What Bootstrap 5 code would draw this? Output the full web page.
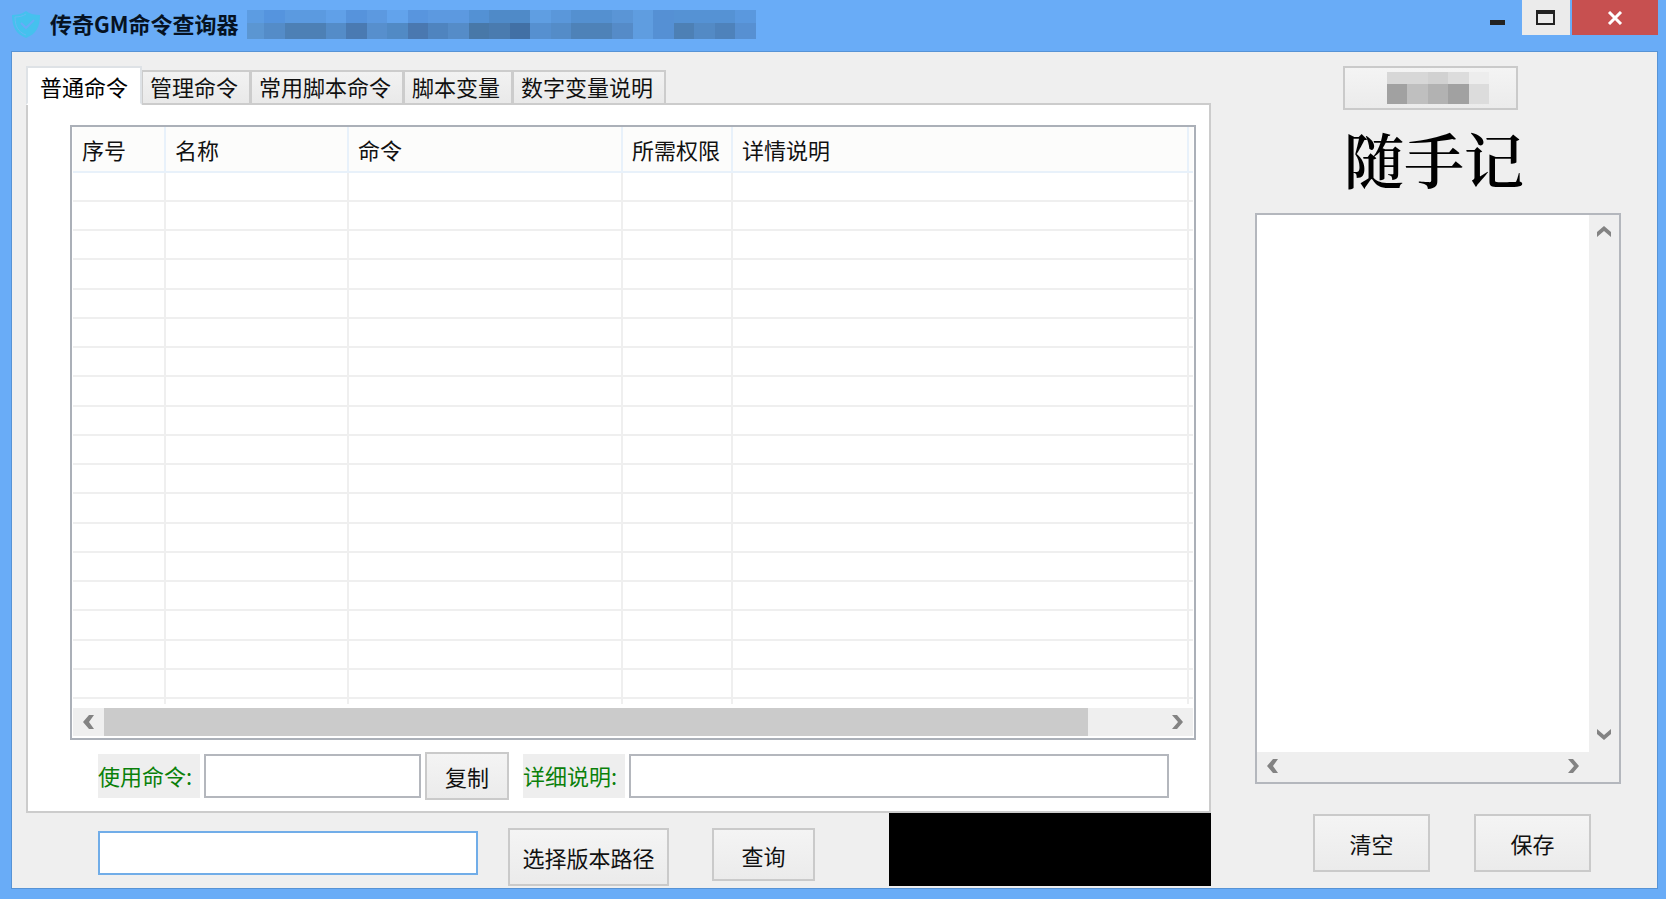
<!DOCTYPE html>
<html lang="zh-CN">
<head>
<meta charset="utf-8">
<meta name="viewport" content="width=device-width, initial-scale=1">
<title>传奇GM命令查询器</title>
<link href="https://cdn.jsdelivr.net/npm/bootstrap@5.3.0/dist/css/bootstrap.min.css" rel="stylesheet">
<style>
  body { background: #69acf7; color: #111; font-family: "Noto Sans CJK SC", sans-serif; font-size: 22px; line-height: 28px; }
  .app-window { min-height: 100vh; padding: 0 8px 11px 11px; }
  .title-bar { height: 51px; }
  .title-bar h1 { font-size: 22px; line-height: 28px; font-weight: 700; color: #061222; margin: 9px 8px 0 8px; }
  .app-icon { margin: 10px 0 0 0; }
  .title-mask { margin-top: 10px; }
  .win-btn { height: 35px; border: 0; padding: 0; display: flex; align-items: center; justify-content: center; }
  .win-min { width: 48px; background: none; }
  .win-max { width: 48px; background: #ebebeb; margin-right: 2px; }
  .win-close { width: 86px; background: #c75050; }
  .client { background: #efefef; border: 1px solid #5793d5; padding: 14px 36px 2px 14px; gap: 44px; }
  .side-col { width: 366px; }
  /* tabs */
  .cmd-tabs { height: 39px; padding: 0; border: 0; position: relative; z-index: 1; margin-bottom: -2px; }
  .cmd-tabs .nav-link { border: 2px solid #ccc; border-left-width: 1px; border-radius: 0; background: linear-gradient(#f2f2f2, #e9e9e9); color: #111; height: 35px; padding: 0 11px 0 7px; line-height: 28px; margin: 0; white-space: nowrap; }
  .cmd-tabs .nav-link.active { height: 39px; line-height: 32px; background: #fff; border-bottom-color: #fff; border-left-width: 2px; padding: 2px 12px; }
  .tab-panel { background: #fff; border: 2px solid #ccc; padding: 20px 13px 11px 42px; }
  /* list view */
  .list-view { border: 2px solid #abb0b8; padding: 0 1px; background: #fff; }
  .grid-table { width: 100%; table-layout: fixed; border-collapse: separate; border-spacing: 0; }
  .grid-table th { height: 46px; font-weight: 400; padding: 0 0 0 9px; background: #fcfcfb; border-right: 2px solid #e8f1fa; border-bottom: 2px solid #e8f1fa; white-space: nowrap; }
  .grid-table td { height: 29px; padding: 0; border-right: 2px solid #efefef; border-bottom: 2px solid #efefef; }
  .grid-table tbody tr:nth-child(4n) td { height: 30px; }
  .grid-table tbody tr:last-child td { height: 5px; border-bottom: 0; }
  .grid-table tr > :last-child { border-right: 0; }
  .c-no { width: 93px; } .c-name { width: 183px; } .c-cmd { width: 274px; } .c-perm { width: 110px; } .c-end { width: 4px; }
  .h-scroll { height: 28px; background: #efefef; margin: 4px 0 2px; }
  .scroll-btn { border: 0; padding: 0; background: #efefef; width: 31px; height: 28px; display: flex; align-items: center; justify-content: center; }
  .scroll-btn.tall { width: 100%; height: 34px; }
  .scroll-btn svg, .win-btn svg { display: block; }
  .thumb { background: #cbcbcb; height: 100%; }
  /* forms */
  .flat-btn { border: 2px solid #cacaca; border-radius: 0; background: linear-gradient(#f4f4f4, #ebebeb); color: #111; padding: 0; font-size: 22px; line-height: 28px; height: 58px; white-space: nowrap; }
  .flat-btn:hover { border-color: #7eb4ea; }
  .flat-input { border: 2px solid #b4b7bd; border-radius: 0; height: 44px; padding: 4px 8px; font-size: 22px; background: #fff; min-width: 0; }
  .flat-input:focus { box-shadow: none; border-color: #569de5; }
  .cmd-label { background: #eee; color: #0a800a; width: 102px; height: 44px; line-height: 42px; white-space: nowrap; }
  .detail-row { margin: 12px 27px 0 28px; }
  .w-cmd { width: 217px; } .w-copy { width: 84px; height: 48px; margin-right: 14px; }
  .path-row { padding-left: 72px; height: 73px; }
  .w-path { width: 380px; border-color: #71ade8; margin-top: 18px; }
  .w-pick { width: 161px; margin: 15px 0 0 30px; } .w-query { width: 103px; height: 53px; margin: 15px 0 0 43px; }
  .black-box { background: #000; width: 322px; }
  .side-top { width: 175px; height: 44px; margin-right: 16px; }
  .memo-title { font-family: "Noto Serif CJK SC", "Liberation Serif", "Noto Sans CJK SC", serif; font-weight: 600; font-size: 60px; line-height: 70px; margin: 13px 8px 0 0; color: #000; }
  .memo-box { border: 2px solid #b4b7bd; background: #efefef; margin-top: 20px; display: grid; grid-template-columns: 1fr 30px; grid-template-rows: 1fr 30px; }
  .memo-box textarea { border: 0; resize: none; width: 100%; height: 100%; overflow: hidden; background: #fff; outline: 0; padding: 6px; display: block; }
  .memo-btns { gap: 44px; margin: 30px 0 0 28px; height: 72px; }
  .memo-btns .flat-btn { width: 117px; }
</style>
</head>
<body>
<div class="app-window d-flex flex-column">
  <header class="title-bar d-flex align-items-start">
    <svg class="app-icon" width="31" height="29" viewBox="0 0 31 29" aria-hidden="true">
      <path d="M15 1C11 4 6 5 1 5c0 12 4 19 14 23C25 24 29 17 29 5 24 5 19 4 15 1z" fill="#45c1ee"/>
      <path d="M15 4C12 6 8 7 4 7c0 9 3 15 11 18" fill="none" stroke="#67b9f4" stroke-width="1"/>
      <path d="M10 13l5 5 8-8" fill="none" stroke="#69acf7" stroke-width="2"/>
    </svg>
    <h1>传奇GM命令查询器</h1>
    <svg class="title-mask" width="509" height="29" viewBox="246 10 509 29" shape-rendering="crispEdges" aria-hidden="true">
      <g><path fill="#5c9ce2" d="M246 10h17v13h-17z"/><path fill="#5594de" d="M263 10h21v13h-21z"/><path fill="#5b9ae0" d="M284 10h41v13h-41z"/><path fill="#60a0e8" d="M325 10h20v13h-20z"/><path fill="#5693dc" d="M345 10h21v13h-21z"/><path fill="#5c99e0" d="M366 10h20v13h-20z"/><path fill="#62a3ec" d="M386 10h21v13h-21z"/><path fill="#5895de" d="M407 10h20v13h-20z"/><path fill="#5c99e0" d="M427 10h41v13h-41z"/><path fill="#5391d4" d="M468 10h20v13h-20z"/><path fill="#4f8ac8" d="M488 10h41v13h-41z"/><path fill="#5f9ee2" d="M529 10h21v13h-21z"/><path fill="#5a97da" d="M550 10h20v13h-20z"/><path fill="#5490d0" d="M570 10h41v13h-41z"/><path fill="#5a95d6" d="M611 10h21v13h-21z"/><path fill="#5f9de0" d="M632 10h20v13h-20z"/><path fill="#5590d4" d="M652 10h21v13h-21z"/><path fill="#5592d4" d="M673 10h61v13h-61z"/><path fill="#5a98de" d="M734 10h21v13h-21z"/></g>
      <g><path fill="#5b96d2" d="M246 23h17v16h-17z"/><path fill="#548cc8" d="M263 23h21v16h-21z"/><path fill="#4d80b5" d="M284 23h41v16h-41z"/><path fill="#548cc8" d="M325 23h20v16h-20z"/><path fill="#4a7ab2" d="M345 23h21v16h-21z"/><path fill="#578fcd" d="M366 23h20v16h-20z"/><path fill="#518ac5" d="M386 23h21v16h-21z"/><path fill="#4a78b0" d="M407 23h20v16h-20z"/><path fill="#4f84bf" d="M427 23h20v16h-20z"/><path fill="#558cc8" d="M447 23h21v16h-21z"/><path fill="#4878a8" d="M468 23h20v16h-20z"/><path fill="#4a7baf" d="M488 23h21v16h-21z"/><path fill="#4270a5" d="M509 23h20v16h-20z"/><path fill="#5690d0" d="M529 23h21v16h-21z"/><path fill="#548cc8" d="M550 23h20v16h-20z"/><path fill="#4e82b8" d="M570 23h41v16h-41z"/><path fill="#558bc8" d="M611 23h21v16h-21z"/><path fill="#5f9de0" d="M632 23h20v16h-20z"/><path fill="#5590d4" d="M652 23h21v16h-21z"/><path fill="#4d80b5" d="M673 23h20v16h-20z"/><path fill="#538ac5" d="M693 23h21v16h-21z"/><path fill="#4e82bb" d="M714 23h20v16h-20z"/><path fill="#5790d2" d="M734 23h21v16h-21z"/></g>
    </svg>
    <div class="d-flex ms-auto">
      <button type="button" class="win-btn win-min" aria-label="最小化"><svg width="16" height="16" viewBox="0 0 16 16"><path d="M0 10h15v5H0z" fill="#222"/></svg></button>
      <button type="button" class="win-btn win-max" aria-label="最大化"><svg width="20" height="16" viewBox="0 0 20 16"><path d="M0 0h19v15H0zM2 4v9h15V4z" fill="#222" fill-rule="evenodd"/></svg></button>
      <button type="button" class="win-btn win-close" aria-label="关闭"><svg width="16" height="14" viewBox="0 0 16 14"><path d="M2 1l12 12M14 1L2 13" stroke="#fff" stroke-width="3"/></svg></button>
    </div>
  </header>

  <main class="client d-flex flex-grow-1">
    <section class="flex-grow-1 d-flex flex-column">
      <nav class="cmd-tabs nav nav-tabs flex-nowrap align-items-end" aria-label="命令分类">
        <a class="nav-link active align-self-start" href="#normal">普通命令</a>
        <a class="nav-link" href="#admin">管理命令</a>
        <a class="nav-link" href="#script">常用脚本命令</a>
        <a class="nav-link" href="#vars">脚本变量</a>
        <a class="nav-link" href="#numvars">数字变量说明</a>
      </nav>
      <div class="tab-panel flex-grow-1" id="normal">
        <div class="list-view">
          <table class="grid-table">
            <colgroup><col class="c-no"><col class="c-name"><col class="c-cmd"><col class="c-perm"><col><col class="c-end"></colgroup>
            <thead><tr><th scope="col">序号</th><th scope="col">名称</th><th scope="col">命令</th><th scope="col">所需权限</th><th scope="col">详情说明</th><th class="p-0"></th></tr></thead>
            <tbody id="rows"></tbody>
          </table>
          <div class="h-scroll d-flex">
            <button type="button" class="scroll-btn" aria-label="向左滚动"><svg width="12" height="14" viewBox="0 0 12 14"><path d="M6 0h5L6 7l5 7H6L0 7z" fill="#838383"/></svg></button>
            <div class="flex-grow-1"><div class="thumb" style="width:93%"></div></div>
            <button type="button" class="scroll-btn" aria-label="向右滚动"><svg width="12" height="14" viewBox="0 0 12 14"><path d="M0 0h5l6 7-6 7H0l6-7z" fill="#838383"/></svg></button>
          </div>
        </div>
        <div class="detail-row d-flex align-items-center">
          <label class="cmd-label flex-shrink-0" for="cmd">使用命令:</label>
          <input class="flat-input form-control w-cmd ms-1 flex-shrink-0" id="cmd" type="text">
          <button type="button" class="btn flat-btn w-copy ms-1 flex-shrink-0">复制</button>
          <label class="cmd-label flex-shrink-0" for="detail">详细说明:</label>
          <input class="flat-input form-control ms-1 flex-grow-1" id="detail" type="text">
        </div>
      </div>
      <div class="path-row d-flex align-items-start">
        <input class="flat-input form-control w-path" type="text" aria-label="版本路径">
        <button type="button" class="btn flat-btn w-pick">选择版本路径</button>
        <button type="button" class="btn flat-btn w-query">查询</button>
        <div class="black-box ms-auto h-100"></div>
      </div>
    </section>

    <aside class="side-col flex-shrink-0 d-flex flex-column">
      <button type="button" class="btn flat-btn side-top align-self-center d-flex justify-content-center align-items-center" aria-label="链接">
        <svg class="ms-3" width="102" height="32" viewBox="0 0 102 32" shape-rendering="crispEdges"><path fill="#d7d7d7" d="M0 0h41v12H0z"/><path fill="#d1d1d1" d="M41 0h20v12H41z"/><path fill="#dcdcdc" d="M61 0h21v12H61z"/><path fill="#ededed" d="M82 0h20v12H82z"/><path fill="#a1a1a1" d="M0 12h20v20H0zM61 12h21v20H61z"/><path fill="#bfbfbf" d="M20 12h21v20H20z"/><path fill="#b2b2b2" d="M41 12h20v20H41z"/><path fill="#dcdcdc" d="M82 12h20v20H82z"/></svg>
      </button>
      <h2 class="memo-title text-center">随手记</h2>
      <div class="memo-box flex-grow-1">
        <textarea aria-label="随手记"></textarea>
        <div class="d-flex flex-column justify-content-between">
          <button type="button" class="scroll-btn tall" aria-label="向上滚动"><svg width="14" height="12" viewBox="0 0 14 12"><path d="M0 11V6l7-6 7 6v5L7 5z" fill="#838383"/></svg></button>
          <button type="button" class="scroll-btn tall" aria-label="向下滚动"><svg width="14" height="12" viewBox="0 0 14 12"><path d="M0 0v5l7 6 7-6V0L7 6z" fill="#838383"/></svg></button>
        </div>
        <div class="d-flex justify-content-between">
          <button type="button" class="scroll-btn" aria-label="向左滚动"><svg width="12" height="14" viewBox="0 0 12 14"><path d="M6 0h5L6 7l5 7H6L0 7z" fill="#838383"/></svg></button>
          <button type="button" class="scroll-btn" aria-label="向右滚动"><svg width="12" height="14" viewBox="0 0 12 14"><path d="M0 0h5l6 7-6 7H0l6-7z" fill="#838383"/></svg></button>
        </div>
      </div>
      <div class="memo-btns d-flex justify-content-center">
        <button type="button" class="btn flat-btn">清空</button>
        <button type="button" class="btn flat-btn">保存</button>
      </div>
    </aside>
  </main>
</div>
<script>
  // eighteen empty list rows, then the partly visible one above the scroll bar
  document.getElementById('rows').innerHTML = ('<tr>' + '<td></td>'.repeat(6) + '</tr>').repeat(19);
</script>
<script src="https://cdn.jsdelivr.net/npm/bootstrap@5.3.0/dist/js/bootstrap.bundle.min.js"></script>
</body>
</html>
